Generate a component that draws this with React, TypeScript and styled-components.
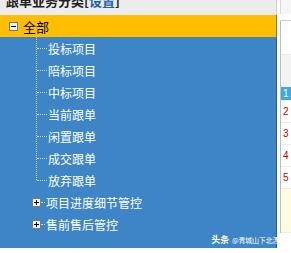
import styled, { createGlobalStyle } from "styled-components";

const GlobalStyle = createGlobalStyle`
  html, body {
    margin: 0;
    padding: 0;
    background: #ffffff;
    overflow: hidden;
  }
  body {
    font-family: "Noto Sans CJK SC", "Noto Sans", sans-serif;
  }
`;

const Page = styled.div`
  display: flex;
  width: 291px;
  height: 253px;
  overflow: hidden;
  position: relative;
`;

const Sidebar = styled.div`
  width: 277px;
  display: flex;
  flex-direction: column;
  flex-shrink: 0;
`;

const TitleBar = styled.div`
  height: 15px;
  overflow: hidden;
  background: #ececec;
  border-right: 1px solid #cfcfcf;
  padding-left: 6px;
  font-size: 13px;
  font-weight: 700;
  color: #222;
  white-space: nowrap;

  span {
    display: block;
    margin-top: -9px;
    line-height: 20px;
  }

  a {
    color: #1f5fb0;
  }
`;

const Tree = styled.div`
  background: #3d85c6;
  border-right: 1px solid #2c5a86;
  height: 211px;
  display: flex;
  flex-direction: column;
`;

const RootRow = styled.div`
  background: #ffbf00;
  border-right: 1px solid #8a7a40;
  height: 22px;
  display: flex;
  align-items: center;
  padding-left: 9px;
  gap: 5px;
  font-size: 13px;
  color: #000;
`;

const Toggle = styled.span<{ $open?: boolean }>`
  width: 9px;
  height: 9px;
  box-sizing: border-box;
  border: 1px solid #7a7a7a;
  background: #f4f4f4;
  position: relative;
  flex-shrink: 0;

  &::before {
    content: "";
    position: absolute;
    left: 1px;
    right: 1px;
    top: 3px;
    height: 1px;
    background: #000;
  }

  &::after {
    content: "";
    position: absolute;
    top: 1px;
    bottom: 1px;
    left: 3px;
    width: 1px;
    background: #000;
    display: ${(p) => (p.$open ? "none" : "block")};
  }
`;

const Children = styled.div`
  display: flex;
  flex-direction: column;
  padding-left: 32px;
  position: relative;

  &::before {
    content: "";
    position: absolute;
    left: 36px;
    top: 0;
    height: 143px;
    border-left: 1px dotted #c8d8ea;
  }
`;

const Item = styled.div`
  height: 22px;
  display: flex;
  align-items: center;
  font-size: 12px;
  color: #ffffff;
  white-space: nowrap;
`;

const Connector = styled.span<{ $w: number }>`
  width: ${(p) => p.$w}px;
  margin-left: ${(p) => (p.$w > 5 ? 5 : 0)}px;
  border-top: 1px dotted #c8d8ea;
  flex-shrink: 0;
  margin-right: 1px;
`;

const Watermark = styled.div`
  position: absolute;
  right: 5px;
  bottom: 8px;
  font-size: 7px;
  line-height: 10px;
  color: #ffffff;
  white-space: nowrap;
  letter-spacing: -0.2px;

  b {
    font-size: 9px;
    margin-right: 3px;
  }
`;

const RightStrip = styled.div`
  flex: 1;
  display: flex;
  flex-direction: column;
  padding-left: 3px;
`;

const StripTop = styled.div`
  height: 14px;
  border-left: 1px solid #d8d8d8;
  background: #f6f6f6;
`;

const StripBody = styled.div`
  margin-top: 6px;
  border-left: 1px solid #bdbdbd;
  border-top: 1px solid #cfcfcf;
  display: flex;
  flex-direction: column;
  height: 212px;
`;

const Cell = styled.div<{ $bg?: string; $h: number; $color?: string }>`
  height: ${(p) => p.$h}px;
  box-sizing: border-box;
  background: ${(p) => p.$bg || "#ffffff"};
  color: ${(p) => p.$color || "#c00000"};
  font-size: 10px;
  font-family: "Liberation Sans", sans-serif;
  line-height: ${(p) => p.$h}px;
  padding-left: 2px;
  overflow: hidden;
  border-bottom: 1px solid #ececec;
`;

const items = ["投标项目", "陪标项目", "中标项目", "当前跟单", "闲置跟单", "成交跟单", "放弃跟单"];
const groups = ["项目进度细节管控", "售前售后管控"];

export default function App() {
  return (
    <>
      <GlobalStyle />
      <Page>
        <Sidebar>
          <TitleBar>
            <span>
              跟单业务分类[<a>设置</a>]
            </span>
          </TitleBar>
          <RootRow>
            <Toggle $open />
            <span>全部</span>
          </RootRow>
          <Tree>
            <Children>
              {items.map((t) => (
                <Item key={t}>
                  <Connector $w={10} />
                  {t}
                </Item>
              ))}
              {groups.map((t) => (
                <Item key={t}>
                  <Toggle />
                  <Connector $w={4} />
                  {t}
                </Item>
              ))}
            </Children>
          </Tree>
        </Sidebar>
        <RightStrip>
          <StripTop />
          <StripBody>
            <Cell $h={34} />
            <Cell $h={32} $bg="#f3f3f3" />
            <Cell $h={14} $bg="#45a8dc" $color="#ffffff">1</Cell>
            <Cell $h={22}>2</Cell>
            <Cell $h={22}>3</Cell>
            <Cell $h={22}>4</Cell>
            <Cell $h={22}>5</Cell>
            <Cell $h={44} $bg="#fffbe0" />
          </StripBody>
        </RightStrip>
        <Watermark>
          <b>头条</b>@青城山下北漂穴
        </Watermark>
      </Page>
    </>
  );
}
